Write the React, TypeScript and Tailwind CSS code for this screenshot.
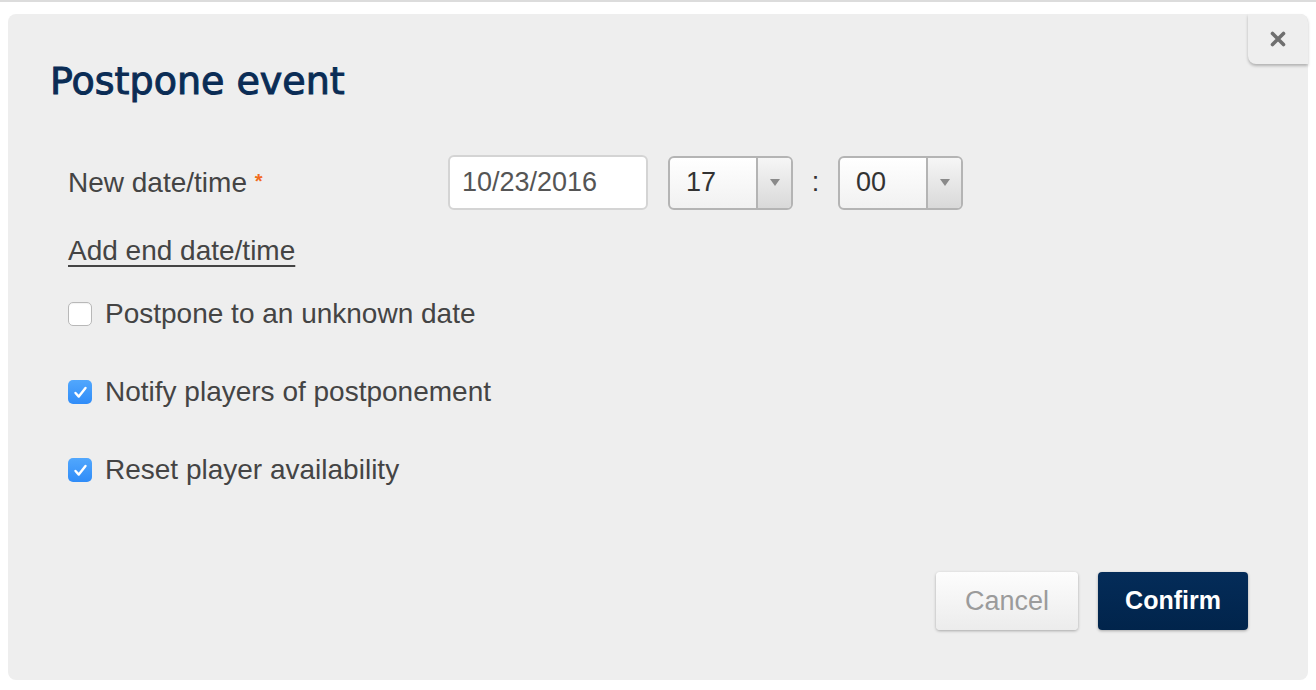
import React from "react";

const Caret = () => (
  <svg width="12" height="9" viewBox="0 0 12 9"><path d="M1 1h10L6 8z" fill="#8a8a8a" /></svg>
);

const Select = ({ value }: { value: string }) => (
  <div className="flex h-[54px] w-[125px] overflow-hidden rounded-[6px] border-2 border-[#b4b4b4] bg-gradient-to-b from-white to-[#f1f1f1]">
    <div className="flex flex-1 items-center pl-[16px] text-[27px] text-[#333]">{value}</div>
    <div className="flex w-[35px] items-center justify-center border-l-2 border-[#b4b4b4] bg-gradient-to-b from-[#f6f6f6] to-[#d9d9d9]">
      <Caret />
    </div>
  </div>
);

const Check = ({ checked }: { checked: boolean }) =>
  checked ? (
    <div className="flex h-[24px] w-[24px] items-center justify-center rounded-[5px] bg-gradient-to-b from-[#51a7fd] to-[#2f8cf8]">
      <svg width="15" height="13" viewBox="0 0 15 13"><path d="M2.5 7l3.3 3.6L12.5 2" fill="none" stroke="#fff" strokeWidth="2.4" strokeLinecap="round" strokeLinejoin="round" /></svg>
    </div>
  ) : (
    <div className="h-[24px] w-[24px] rounded-[5px] border border-[#b8b8b8] bg-white shadow-[inset_0_1px_1px_rgba(0,0,0,0.05)]" />
  );

export default function App() {
  return (
    <div className="min-h-[690px] bg-white border-t-2 border-[#dcdcdc]" style={{ fontFamily: '"Liberation Sans", Arial, sans-serif' }}>
      <div className="relative ml-[8px] mt-[12px] h-[666px] w-[1300px] rounded-[8px] bg-[#eeeeee]">
        <button className="absolute right-0 top-0 flex h-[50px] w-[60px] items-center justify-center rounded-bl-[8px] rounded-tr-[8px] bg-[#eeeeee] shadow-[0_2px_3px_rgba(0,0,0,0.25)]">
          <svg width="16" height="16" viewBox="0 0 16 16"><path d="M2.5 2.5l11 11M13.5 2.5l-11 11" stroke="#6f6f6f" strokeWidth="3.6" strokeLinecap="round" /></svg>
        </button>
        <div className="pl-[42px] pt-[45px]">
          <h1 className="text-[38px] font-normal leading-[44px] text-[#0a2c55]" style={{ fontFamily: '"DejaVu Sans", sans-serif', WebkitTextStroke: "1px #0a2c55" }}>
            Postpone event
          </h1>
        </div>
        <div className="pl-[60px] pt-[52px] text-[28px] text-[#444]">
          <div className="flex items-center">
            <div className="w-[380px]">
              New date/time <span className="relative -top-[4px] text-[20px] font-bold text-[#f26b1d]">*</span>
            </div>
            <div className="flex h-[55px] w-[200px] items-center rounded-[6px] border-2 border-[#d4d4d4] bg-white pl-[12px] text-[27px] text-[#555]">10/23/2016</div>
            <div className="ml-[20px]"><Select value="17" /></div>
            <div className="w-[45px] text-center text-[27px] text-[#333]">:</div>
            <Select value="00" />
          </div>
          <div className="mt-[20px]">
            <span className="underline decoration-2 underline-offset-[5px]">Add end date/time</span>
          </div>
          <div className="mt-[25px] flex flex-col gap-[44px]">
            <div className="flex items-center gap-[13px]"><Check checked={false} /><span className="leading-[34px]">Postpone to an unknown date</span></div>
            <div className="flex items-center gap-[13px]"><Check checked /><span className="leading-[34px]">Notify players of postponement</span></div>
            <div className="flex items-center gap-[13px]"><Check checked /><span className="leading-[34px]">Reset player availability</span></div>
          </div>
        </div>
        <div className="absolute bottom-[50px] right-[60px] flex gap-[20px]">
          <button className="h-[58px] w-[142px] rounded-[4px] bg-gradient-to-b from-[#fdfdfd] to-[#ececec] text-[27px] text-[#9b9b9b] shadow-[0_1px_3px_rgba(0,0,0,0.3)]">Cancel</button>
          <button className="h-[58px] w-[150px] rounded-[4px] bg-gradient-to-b from-[#042c59] to-[#01244b] text-[25px] font-bold text-white shadow-[0_1px_3px_rgba(0,0,0,0.3)]">Confirm</button>
        </div>
      </div>
    </div>
  );
}
